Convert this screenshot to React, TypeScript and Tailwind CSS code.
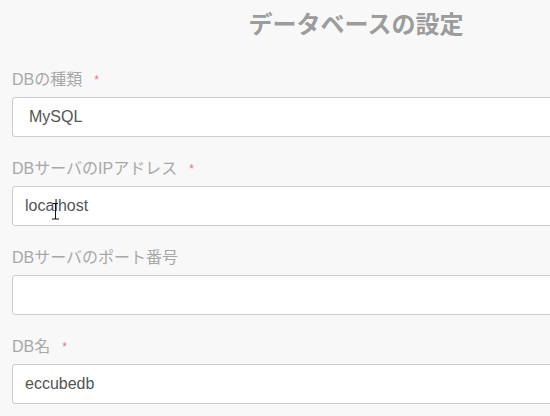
import type { ReactNode } from 'react';

const FONT = '"Liberation Sans", "Noto Sans CJK JP", sans-serif';

function Field({
  label,
  required,
  children,
}: {
  label: string;
  required?: boolean;
  children: ReactNode;
}) {
  return (
    <div className="flex flex-col">
      <label className="flex h-5 items-center text-[16px] leading-5 text-[#a8a8a8] mb-[7px]">
        <span>{label}</span>
        {required && <span className="ml-3 text-[12px] text-[#dc7a76]">*</span>}
      </label>
      {children}
    </div>
  );
}

function TextBox({ value }: { value: string }) {
  return (
    <div className="h-10 rounded-[3px] border border-[#cccccc] bg-white px-3 flex items-center text-[16px] text-[#555555]">
      {value}
    </div>
  );
}

export default function App() {
  return (
    <div
      className="min-h-[416px] w-full overflow-hidden bg-[#f8f8f8]"
      style={{ fontFamily: FONT }}
    >
      <div className="w-[712px] px-3 pt-[9px]">
        <h1 className="text-center text-[24px] font-bold leading-8 text-[#9c9c9c] mb-[29px]">
          データベースの設定
        </h1>

        <div className="flex flex-col gap-[22px]">
          <Field label="DBの種類" required>
            <div className="h-10 rounded-[3px] border border-[#cccccc] bg-white pl-4 flex items-center text-[16px] text-[#555555]">
              MySQL
            </div>
          </Field>

          <Field label="DBサーバのIPアドレス" required>
            <div className="relative">
              <TextBox value="localhost" />
              {/* mouse I-beam cursor captured in the screenshot */}
              <svg
                className="absolute left-[39px] top-[16px]"
                width="9"
                height="18"
                viewBox="0 0 9 18"
              >
                <path d="M4.5 1V17M2 1.5H7M1 17H8" stroke="#111" strokeWidth="1" fill="none" />
              </svg>
            </div>
          </Field>

          <Field label="DBサーバのポート番号">
            <TextBox value="" />
          </Field>

          <Field label="DB名" required>
            <TextBox value="eccubedb" />
          </Field>
        </div>
      </div>
    </div>
  );
}
